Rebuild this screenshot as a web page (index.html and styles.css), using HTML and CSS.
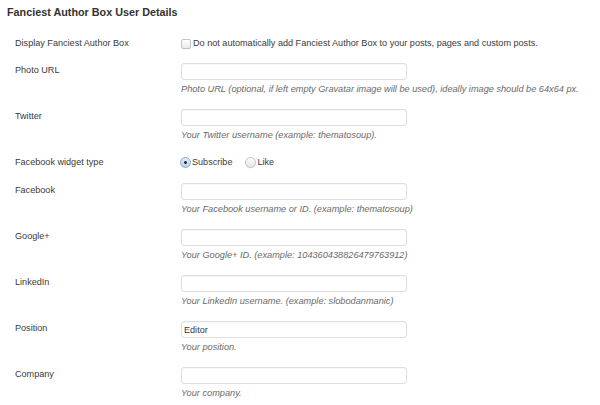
FILE: index.html
```html
<!DOCTYPE html>
<html lang="en">
<head>
<meta charset="utf-8">
<title>Fanciest Author Box User Details</title>
<link rel="stylesheet" href="styles.css">
</head>
<body>
<h3 class="title">Fanciest Author Box User Details</h3>
<div class="form">
  <div class="row row-check">
    <div class="label">Display Fanciest Author Box</div>
    <div class="field">
      <label class="choice"><input type="checkbox" class="check">Do not automatically add Fanciest Author Box to your posts, pages and custom posts.</label>
    </div>
  </div>
  <div class="row row-input">
    <div class="label">Photo URL</div>
    <div class="field">
      <input type="text" class="text">
      <div class="desc">Photo URL (optional, if left empty Gravatar image will be used), ideally image should be 64x64 px.</div>
    </div>
  </div>
  <div class="row row-input">
    <div class="label">Twitter</div>
    <div class="field">
      <input type="text" class="text">
      <div class="desc">Your Twitter username (example: thematosoup).</div>
    </div>
  </div>
  <div class="row row-radio">
    <div class="label">Facebook widget type</div>
    <div class="field">
      <label class="choice"><input type="radio" name="fbtype" class="radio" checked>Subscribe</label>
      <label class="choice choice-next"><input type="radio" name="fbtype" class="radio">Like</label>
    </div>
  </div>
  <div class="row row-input">
    <div class="label">Facebook</div>
    <div class="field">
      <input type="text" class="text">
      <div class="desc">Your Facebook username or ID. (example: thematosoup)</div>
    </div>
  </div>
  <div class="row row-input">
    <div class="label">Google+</div>
    <div class="field">
      <input type="text" class="text">
      <div class="desc">Your Google+ ID. (example: 104360438826479763912)</div>
    </div>
  </div>
  <div class="row row-input">
    <div class="label">LinkedIn</div>
    <div class="field">
      <input type="text" class="text">
      <div class="desc">Your LinkedIn username. (example: slobodanmanic)</div>
    </div>
  </div>
  <div class="row row-input">
    <div class="label">Position</div>
    <div class="field">
      <input type="text" class="text" value="Editor">
      <div class="desc">Your position.</div>
    </div>
  </div>
  <div class="row row-input">
    <div class="label">Company</div>
    <div class="field">
      <input type="text" class="text">
      <div class="desc">Your company.</div>
    </div>
  </div>
</div>
</body>
</html>
```
FILE: styles.css
```css
* {
  box-sizing: border-box;
}

html, body {
  margin: 0;
  padding: 0;
  background: #ffffff;
}

body {
  font-family: "Liberation Sans", Arial, sans-serif;
  font-size: 9.1px;
  color: #3a3a3a;
  width: 600px;
  height: 405px;
  overflow: hidden;
}

.title {
  margin: 0;
  padding: 5px 0 0 7px;
  font-size: 10.8px;
  line-height: 14px;
  font-weight: bold;
  color: #333333;
}

.form {
  margin-top: 9px;
  padding-left: 15px;
}

.row {
  display: grid;
  grid-template-columns: 166px 1fr;
}

.row-check {
  height: 27px;
}

.row-input {
  height: 46px;
}

.row-radio {
  height: 28px;
}

.label {
  padding-top: 8px;
  line-height: 14px;
  color: #3a3a3a;
}

.field {
  padding-top: 8px;
  line-height: 14px;
}

.row-check .field,
.row-radio .field {
  display: flex;
  align-items: flex-start;
}

.choice {
  display: flex;
  align-items: flex-start;
  color: #3a3a3a;
}

.choice-next {
  margin-left: 14px;
}

.check {
  -webkit-appearance: none;
  appearance: none;
  margin: 3px 2px 0 0;
  width: 10px;
  height: 10px;
  border: 1px solid #c2c2c2;
  border-radius: 2px;
  background: linear-gradient(#ffffff, #e9e9e9);
  box-shadow: 0 0.5px 0.5px rgba(0, 0, 0, 0.06);
}

.radio {
  -webkit-appearance: none;
  appearance: none;
  margin: 2px 1px 0 -1px;
  width: 11px;
  height: 11px;
  border: 1px solid #c0c0c0;
  border-radius: 50%;
  background: linear-gradient(#fdfdfd, #e6e6e6);
  box-shadow: 0 0.5px 0.5px rgba(0, 0, 0, 0.06);
}

.radio:checked {
  border-color: #8eaad0;
  background:
    radial-gradient(circle at center, #2a2a2a 0, #2a2a2a 1.1px, rgba(42, 42, 42, 0) 1.7px),
    linear-gradient(#e6eff9, #b6cfec);
}

.text {
  display: block;
  margin: 0;
  width: 226px;
  height: 17px;
  padding: 0 2px;
  border: 1px solid #dedede;
  border-radius: 3px;
  background: #ffffff;
  box-shadow: inset 0 1px 1px rgba(0, 0, 0, 0.03);
  font-family: "Liberation Sans", Arial, sans-serif;
  font-size: 9.1px;
  color: #3a3a3a;
  outline: none;
}

.desc {
  margin-top: 2px;
  line-height: 14px;
  font-size: 9.2px;
  font-style: italic;
  color: #6a6a6a;
  white-space: nowrap;
}
```
